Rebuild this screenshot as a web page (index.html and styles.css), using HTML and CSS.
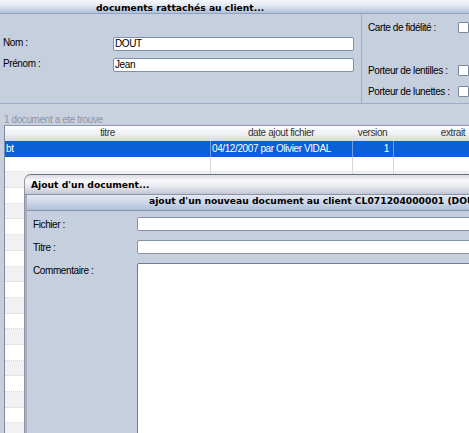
FILE: index.html
```html
<!DOCTYPE html>
<html>
<head>
<meta charset="utf-8">
<link rel="stylesheet" href="styles.css">
</head>
<body>
<div class="app">
  <div class="title">documents rattachés au client...</div>
  <div class="client">
    <div class="ident">
      <div class="field"><span class="lbl">Nom :</span><div class="input">DOUT</div></div>
      <div class="field"><span class="lbl">Prénom :</span><div class="input">Jean</div></div>
    </div>
    <div class="flags">
      <div class="flag"><span class="flbl">Carte de fidélité :</span><span class="cb"></span></div>
      <div class="flag lent"><span class="flbl">Porteur de lentilles :</span><span class="cb"></span></div>
      <div class="flag lun"><span class="flbl">Porteur de lunettes :</span><span class="cb"></span></div>
    </div>
  </div>
  <div class="count">1 document a ete trouve</div>
  <div class="grid">
    <div class="row head"><div>titre</div><div>date ajout fichier</div><div>version</div><div>extrait</div></div>
    <div class="row sel"><div class="c">bt</div><div class="c">04/12/2007 par Olivier VIDAL</div><div class="c num">1</div><div class="c"></div></div>
    <div class="row w"><div class="c"></div><div class="c"></div><div class="c"></div><div class="c"></div></div>
    <div class="row g"><div class="c"></div><div class="c"></div><div class="c"></div><div class="c"></div></div>
    <div class="row w"><div class="c"></div><div class="c"></div><div class="c"></div><div class="c"></div></div>
    <div class="row g"><div class="c"></div><div class="c"></div><div class="c"></div><div class="c"></div></div>
    <div class="row w"><div class="c"></div><div class="c"></div><div class="c"></div><div class="c"></div></div>
    <div class="row g"><div class="c"></div><div class="c"></div><div class="c"></div><div class="c"></div></div>
    <div class="row w"><div class="c"></div><div class="c"></div><div class="c"></div><div class="c"></div></div>
    <div class="row g"><div class="c"></div><div class="c"></div><div class="c"></div><div class="c"></div></div>
    <div class="row w"><div class="c"></div><div class="c"></div><div class="c"></div><div class="c"></div></div>
    <div class="row g"><div class="c"></div><div class="c"></div><div class="c"></div><div class="c"></div></div>
    <div class="row w"><div class="c"></div><div class="c"></div><div class="c"></div><div class="c"></div></div>
    <div class="row g"><div class="c"></div><div class="c"></div><div class="c"></div><div class="c"></div></div>
    <div class="row w"><div class="c"></div><div class="c"></div><div class="c"></div><div class="c"></div></div>
    <div class="row g"><div class="c"></div><div class="c"></div><div class="c"></div><div class="c"></div></div>
    <div class="row w"><div class="c"></div><div class="c"></div><div class="c"></div><div class="c"></div></div>
    <div class="row g"><div class="c"></div><div class="c"></div><div class="c"></div><div class="c"></div></div>
    <div class="row w"><div class="c"></div><div class="c"></div><div class="c"></div><div class="c"></div></div>
    <div class="row g"><div class="c"></div><div class="c"></div><div class="c"></div><div class="c"></div></div>
  </div>
</div>

<div class="dialog">
  <div class="dlg-title">Ajout d'un document...</div>
  <div class="dlg-body">
    <div class="dlg-head">ajout d'un nouveau document au client CL071204000001 (DOUT Jean)</div>
    <div class="dlg-form">
      <div class="frow"><span class="flabel">Fichier :</span><div class="finput"></div></div>
      <div class="frow"><span class="flabel">Titre :</span><div class="finput"></div></div>
      <div class="frow"><span class="flabel">Commentaire :</span><div class="farea"></div></div>
    </div>
  </div>
</div>
</body>
</html>
```

FILE: styles.css
```css
html, body {
  margin: 0;
  overflow: hidden;
}
body {
  font-family: "Liberation Sans", Arial, sans-serif;
  font-size: 10px;
  letter-spacing: -0.4px;
  color: #000;
  background: #c6cfdd;
  width: 469px;
  height: 433px;
  position: relative;
}
.app {
  width: 520px;
}
.title {
  height: 14px;
  box-sizing: border-box;
  padding: 2px 0 0 96px;
  line-height: 13px;
  border-bottom: 1px solid #8fa4c4;
  background: linear-gradient(#f5f7fb, #e2e8f1 45%, #b1c0d7);
  font: bold 9.2px "DejaVu Sans", Verdana, sans-serif;
  letter-spacing: 0;
  white-space: nowrap;
}
.client {
  display: flex;
  height: 89px;
  border-bottom: 1px solid #9badc9;
}
.ident {
  width: 362px;
  flex: none;
  box-sizing: border-box;
  padding-top: 23px;
  border-right: 1px solid #9badc9;
}
.field {
  display: flex;
  align-items: flex-start;
  height: 14px;
  margin-bottom: 7px;
}
.lbl {
  width: 113px;
  padding-left: 3px;
  box-sizing: border-box;
  line-height: 12px;
}
.input {
  width: 241px;
  height: 14px;
  box-sizing: border-box;
  border: 1px solid #7f90ad;
  border-radius: 2px;
  background: #fff;
  line-height: 11px;
  padding-left: 1px;
}
.flags {
  flex: 1;
  padding: 8px 0 0 6px;
}
.flag {
  display: flex;
  align-items: center;
  height: 11px;
  white-space: nowrap;
}
.flag.lent { margin-top: 32px; }
.flag.lun { margin-top: 10px; }
.flbl {
  width: 90px;
  flex: none;
  line-height: 12px;
}
.cb {
  width: 11px;
  height: 11px;
  box-sizing: border-box;
  border: 1px solid #7d889c;
  border-radius: 1px;
  background: #fff;
  flex: none;
}
.count {
  height: 21px;
  box-sizing: border-box;
  padding: 10px 0 0 4px;
  line-height: 12px;
  color: #8c96a8;
  background: #c9d1df;
}
.grid {
  margin-left: 4px;
  border-left: 1px solid #7d8aa0;
  border-top: 1px solid #8c98ac;
  background: #fff;
}
.row {
  display: grid;
  grid-template-columns: 205px 142px 41px 120px;
  height: 15.7px;
  box-sizing: border-box;
  line-height: 15px;
  white-space: nowrap;
}
.row.head {
  height: 15px;
  line-height: 13px;
  text-align: center;
  color: #333;
  background: linear-gradient(#fdfdfe, #eff1f4 50%, #d4d9e2);
}
.row.sel {
  background: #0b60d5;
  color: #fff;
}
.c {
  padding-left: 1px;
  overflow: hidden;
}
.row .c + .c {
  border-left: 1px solid #d3d6dc;
}
.row.sel .c + .c {
  border-left-color: #6f9de2;
}
.num {
  text-align: right;
  padding-right: 4px;
}
.row.w {
  background: #fff;
  border-bottom: 1px dotted #d6d6d6;
}
.row.g {
  background: #f1f1f3;
  border-bottom: 1px dotted #d6d6d6;
}

.dialog {
  position: absolute;
  left: 24px;
  top: 174px;
  width: 480px;
  height: 280px;
  border: 1px solid #676f80;
  border-left-color: #8f95a4;
  border-radius: 7px 7px 0 0;
  background: #c6cfdd;
  overflow: hidden;
}
.dlg-title {
  height: 20px;
  box-sizing: border-box;
  padding: 4px 0 0 6px;
  line-height: 16px;
  border-bottom: 1px solid #8a93a8;
  background: linear-gradient(#d9dbe3, #f8f8fa 30%, #e8e9ef 60%, #c3c6d3);
  font: bold 9.2px "DejaVu Sans", Verdana, sans-serif;
  letter-spacing: 0;
  white-space: nowrap;
}
.dlg-body {
  border-left: 2px solid #a9aeba;
  height: 100%;
}
.dlg-head {
  height: 15px;
  line-height: 15px;
  padding-left: 122px;
  border-bottom: 1px solid #8593ad;
  background: linear-gradient(#e4e9f2, #cdd7e7 50%, #aebfda);
  font: bold 9.2px "DejaVu Sans", Verdana, sans-serif;
  letter-spacing: 0;
  white-space: nowrap;
}
.dlg-form {
  padding: 6px 0 0 6px;
}
.frow {
  display: flex;
  align-items: flex-start;
  margin-bottom: 9px;
}
.flabel {
  width: 104px;
  flex: none;
  padding-top: 2px;
  line-height: 12px;
}
.finput {
  width: 340px;
  height: 14px;
  box-sizing: border-box;
  border: 1px solid #8593aa;
  border-radius: 2px;
  background: #fff;
}
.farea {
  width: 340px;
  height: 200px;
  box-sizing: border-box;
  border: 1px solid #6f7c95;
  border-radius: 2px;
  background: #fff;
}
```
